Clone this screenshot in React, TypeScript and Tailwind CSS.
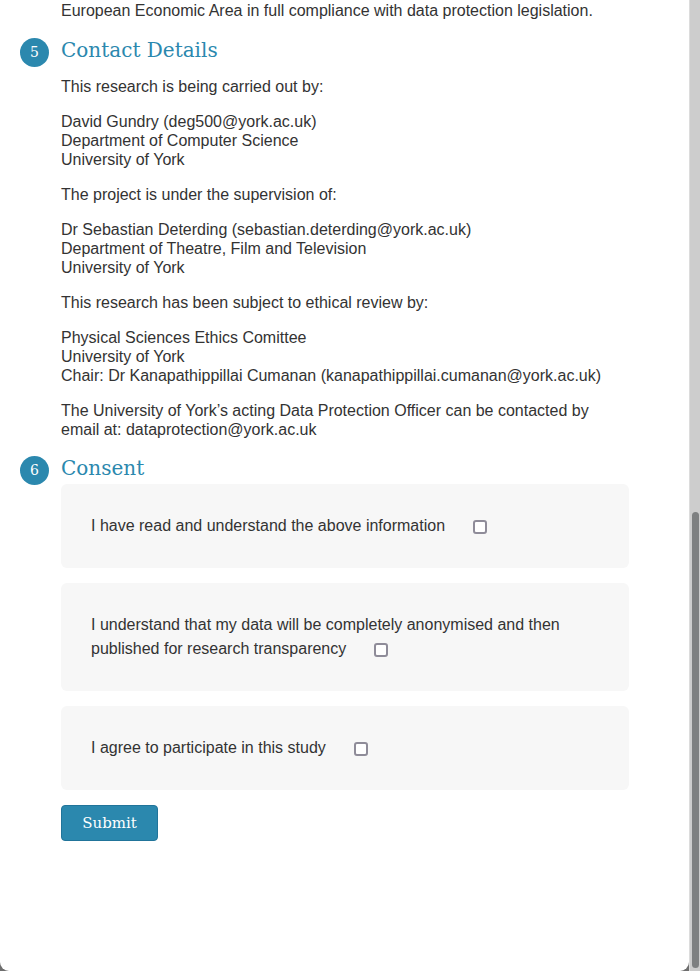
import React from 'react';

const consentItems = [
  'I have read and understand the above information',
  'I understand that my data will be completely anonymised and then published for research transparency',
  'I agree to participate in this study',
];

function SectionHeader({ num, title }: { num: number; title: string }) {
  return (
    <div className="flex items-start gap-[12px] pl-[20px]">
      <div className="flex h-[29px] w-[29px] shrink-0 items-center justify-center rounded-full bg-[#2b88ae] font-['DejaVu_Serif',serif] text-[14px] text-white">
        {num}
      </div>
      <h2 className="font-['DejaVu_Serif',serif] text-[20px] leading-[25px] text-[#2b88ae]">{title}</h2>
    </div>
  );
}

export default function App() {
  return (
    <div className="flex h-[971px] w-[700px] overflow-hidden bg-[#6e6e6e] font-['Liberation_Sans',Arial,sans-serif] text-[16px] leading-[19px] text-[#333333]">
      {/* Page panel */}
      <div className="h-full w-[689px] overflow-hidden rounded-b-[9px] bg-white">
        <div className="-mt-[18px]">
          <p className="w-[568px] ml-[61px]">
            All of your data will be stored on secure university systems located within the
            European Economic Area in full compliance with data protection legislation.
          </p>

          {/* Contact details */}
          <div className="mt-[18px]">
            <SectionHeader num={5} title="Contact Details" />
            <div className="ml-[61px] mt-[10px] flex w-[568px] flex-col gap-[16px]">
              <p>This research is being carried out by:</p>
              <p>
                David Gundry (deg500@york.ac.uk)
                <br />
                Department of Computer Science
                <br />
                University of York
              </p>
              <p>The project is under the supervision of:</p>
              <p>
                Dr Sebastian Deterding (sebastian.deterding@york.ac.uk)
                <br />
                Department of Theatre, Film and Television
                <br />
                University of York
              </p>
              <p>This research has been subject to ethical review by:</p>
              <p>
                Physical Sciences Ethics Comittee
                <br />
                University of York
                <br />
                Chair: Dr Kanapathippillai Cumanan (kanapathippillai.cumanan@york.ac.uk)
              </p>
              <p>
                The University of York’s acting Data Protection Officer can be contacted by email at:
                dataprotection@york.ac.uk
              </p>
            </div>
          </div>

          {/* Consent */}
          <div className="mt-[17px]">
            <SectionHeader num={6} title="Consent" />
            <form className="ml-[61px] -mt-[1px] flex w-[568px] flex-col gap-[15px]">
              {consentItems.map((item) => (
                <div key={item} className="rounded-[6px] bg-[#f7f7f7] p-[30px] leading-[24px]">
                  <label>
                    {item}
                    <input
                      type="checkbox"
                      className="ml-[28px] inline-block h-[14px] w-[14px] appearance-none rounded-[3px] border-2 border-[#8f8c99] bg-white align-[-3px]"
                    />
                  </label>
                </div>
              ))}
              <div>
                <button
                  type="button"
                  className="h-[36px] w-[97px] rounded-[4px] border border-[#21749a] bg-[#2b88ae] font-['DejaVu_Serif',serif] text-[15px] text-white"
                >
                  Submit
                </button>
              </div>
            </form>
          </div>
        </div>
      </div>

      {/* Scrollbar */}
      <div className="flex h-full w-[11px] flex-col items-center border-l border-[#dcdcdc] bg-[#cdcdcd] pt-[512px]">
        <div className="h-[456px] w-[7px] rounded-full bg-[#7e8081]" />
      </div>
    </div>
  );
}
